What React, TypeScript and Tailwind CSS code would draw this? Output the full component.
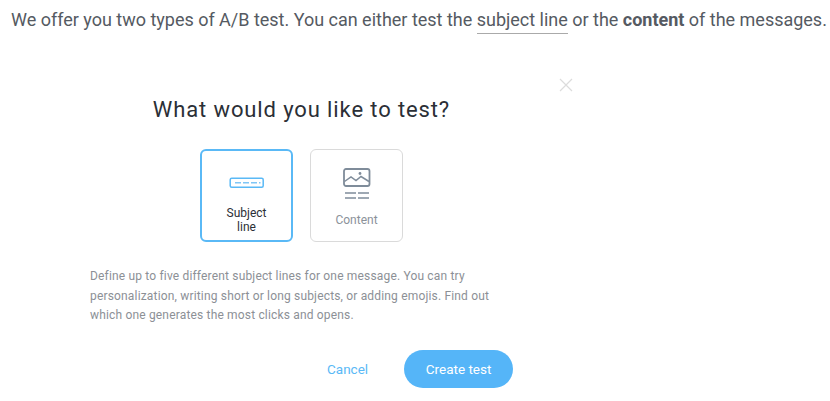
export default function App() {
  return (
    <div className="w-[830px] h-[401px] bg-white overflow-hidden font-['Roboto',sans-serif] relative">
      <p className="pl-[11px] pt-[8px] text-[18px] leading-[24px] tracking-[-0.01px] text-[#555a62] whitespace-nowrap">
        We offer you two types of A/B test. You can either test the{" "}
        <span className="border-b border-[#aaaaaa] pb-[3px]">subject line</span> or the{" "}
        <b className="font-bold">content</b> of the messages.
      </p>

      <button className="absolute left-[559px] top-[78px] w-[14px] h-[14px] text-[#dcdcdc]">
        <svg width="14" height="14" viewBox="0 0 14 14" fill="none" stroke="currentColor" strokeWidth="1.2">
          <path d="M1 1l12 12M13 1L1 13" />
        </svg>
      </button>

      <div className="ml-[90px] w-[430px] mt-[63px]">
        <h2 className="w-[410px] text-center text-[22px] leading-[30px] tracking-[0.88px] text-[#2b2f36] pl-[13px] whitespace-nowrap">
          What would you like to test?
        </h2>

        <div className="w-[410px] flex justify-center gap-[17px] mt-[24px] pl-[13px]">
          <div className="w-[93px] h-[93px] shrink-0 rounded-[6px] border-2 border-[#5ab9f6] flex flex-col items-center">
            <svg className="mt-[26px]" width="36" height="12" viewBox="0 0 36 12" fill="none">
              <rect x="1.2" y="1.2" width="33" height="9" rx="1.5" stroke="#5ab9f6" strokeWidth="1.5" />
              <path d="M6 5.8h6M14 5.8h6M22 5.8h6M30 5.8h1.5" stroke="#7fc6f6" strokeWidth="1.4" />
            </svg>
            <span className="mt-[18px] text-[12px] leading-[13.5px] text-center text-[#2b2f36] w-[60px]">
              Subject line
            </span>
          </div>
          <div className="w-[93px] h-[93px] shrink-0 rounded-[6px] border border-[#dadada] flex flex-col items-center">
            <svg className="mt-[18px]" width="28" height="33" viewBox="0 0 28 33" fill="none" stroke="#7f8c9a">
              <rect x="1" y="1" width="25.5" height="17" rx="2" strokeWidth="1.8" />
              <path d="M1.5 13.5l6.5-4.5 5 3.5 5-4 8 5" strokeWidth="1.5" />
              <circle cx="17" cy="5.5" r="1.4" fill="#7f8c9a" stroke="none" />
              <path d="M2 25h11M15 25h11M2 30h11M15 30h11" strokeWidth="1.5" />
            </svg>
            <span className="mt-[12px] text-[12px] leading-[14px] text-[#8b929a]">Content</span>
          </div>
        </div>

        <p className="mt-[25px] text-[12px] leading-[19.7px] tracking-[0.17px] text-[#8c9096] whitespace-nowrap">
          Define up to five different subject lines for one message. You can try
          <br />
          personalization, writing short or long subjects, or adding emojis. Find out
          <br />
          which one generates the most clicks and opens.
        </p>

        <div className="flex items-center mt-[24px] pl-[237px]">
          <button className="text-[13.5px] text-[#5ab9f6]">Cancel</button>
          <button className="ml-[36px] w-[109px] h-[38px] shrink-0 rounded-full bg-[#55b5f8] text-white text-[13.5px]">
            Create test
          </button>
        </div>
      </div>
    </div>
  );
}
